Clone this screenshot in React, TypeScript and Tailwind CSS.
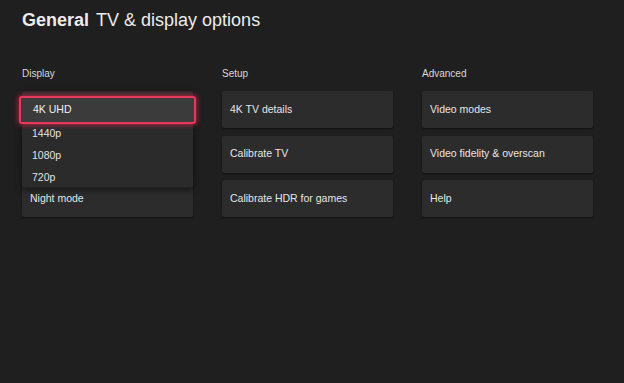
const font = "font-['Liberation_Sans',Arial,sans-serif]";

const setup = ["4K TV details", "Calibrate TV", "Calibrate HDR for games"];
const advanced = ["Video modes", "Video fidelity & overscan", "Help"];
const resolutions = ["4K UHD", "1440p", "1080p", "720p"];

function Tile({ label }: { label: string }) {
  return (
    <div className="h-[37px] bg-[#2c2c2c] rounded-[2px] flex items-center px-[8px] text-[10.5px] text-[#e6e6e6] shadow-[0_1px_2px_rgba(0,0,0,0.4)]">
      {label}
    </div>
  );
}

function Column({ title, children }: { title: string; children: React.ReactNode }) {
  return (
    <div className="flex flex-col">
      <div className="h-[18px] mt-[1px] text-[10px] text-[#d8d8d8] leading-[18px]">{title}</div>
      <div className="mt-[8px] flex flex-col gap-[7.5px]">{children}</div>
    </div>
  );
}

function ResolutionMenu() {
  return (
    <div className="absolute left-0 top-[1px] w-[171px] bg-[#2b2b2b] rounded-[2px] shadow-[0_2px_6px_rgba(0,0,0,0.5)] pt-[7px] border-b border-[#202020]">
      {resolutions.map((r, i) =>
        i === 0 ? (
          <div
            key={r}
            className="mx-[-3px] mt-[-3px] mb-[-1px] h-[28px] flex items-center px-[12px] text-[10.5px] text-[#f0f0f0] bg-[#3b3b3b] rounded-[3px] border-2 border-[#e8375a] shadow-[0_0_5px_1px_rgba(230,40,80,0.7)] relative"
          >
            {r}
          </div>
        ) : (
          <div
            key={r}
            className={`${i === 3 ? "h-[20px] pt-[2px]" : "h-[22px]"} flex items-center px-[10px] text-[10.5px] text-[#e2e2e2]`}
          >
            {r}
          </div>
        )
      )}
    </div>
  );
}

export default function App() {
  return (
    <div className={`w-[624px] h-[383px] bg-[#1f1f1f] ${font} overflow-hidden`}>
      <div className="pl-[22px] pt-[7px] flex items-baseline gap-[7px] text-[18px] text-[#ececec] leading-[26px]">
        <span className="font-bold">General</span>
        <span>TV &amp; display options</span>
      </div>
      <div className="mt-[31px] ml-[22px] grid grid-cols-[171px_171px_171px] gap-x-[29px]">
        <Column title="Display">
          <div className="relative flex flex-col gap-[7.5px]">
            <Tile label="" />
            <Tile label="" />
            <Tile label="Night mode" />
            <ResolutionMenu />
          </div>
        </Column>
        <Column title="Setup">
          {setup.map((s) => (
            <Tile key={s} label={s} />
          ))}
        </Column>
        <Column title="Advanced">
          {advanced.map((s) => (
            <Tile key={s} label={s} />
          ))}
        </Column>
      </div>
    </div>
  );
}
